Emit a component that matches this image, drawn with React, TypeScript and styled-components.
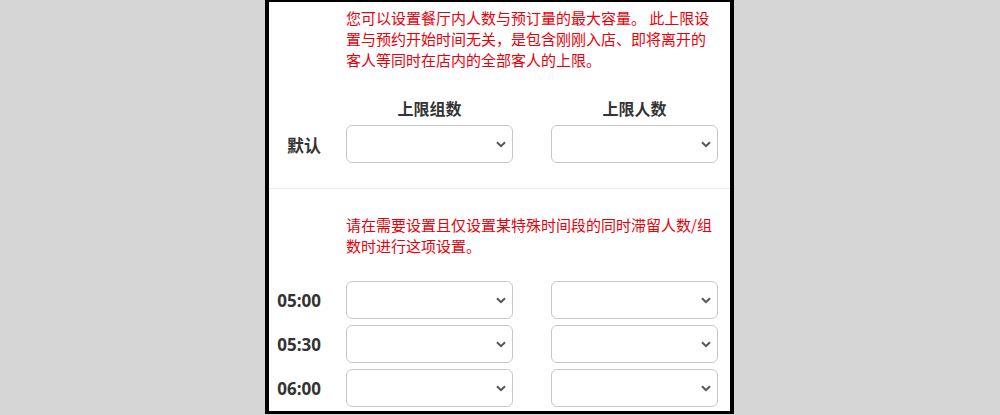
import React from 'react';
import styled, { createGlobalStyle } from 'styled-components';

const GlobalStyle = createGlobalStyle`
  html, body {
    margin: 0;
    padding: 0;
    background: #d6d6d6;
  }
  body {
    font-family: "Noto Sans CJK SC", "Noto Sans", sans-serif;
  }
`;

const Frame = styled.div`
  box-sizing: border-box;
  width: 469px;
  height: 414px;
  margin: 0 0 0 calc(50% - 235px);
  background: #fff;
  border: 4px solid #000;
  border-top-width: 2px;
  border-bottom-width: 3px;
  overflow: hidden;
`;

const Section = styled.section<{ $top: number; $divider?: boolean }>`
  padding: ${p => p.$top}px 11px 25px 0;
  border-bottom: ${p => (p.$divider ? '1px solid #ececec' : 'none')};
`;

const Note = styled.p<{ $gap: number }>`
  margin: 0 0 ${p => p.$gap}px 77px;
  color: #e8000b;
  font-size: 15px;
  line-height: 21px;
`;

const Row = styled.div`
  display: grid;
  grid-template-columns: 77px 372px;
  align-items: center;
  & + & {
    margin-top: 6px;
  }
`;

const Fields = styled.div`
  display: grid;
  grid-template-columns: 1fr 1fr;
  column-gap: 38px;
  align-items: center;
`;

const HeadRow = styled(Row)`
  margin-bottom: 6px;
`;

const ColTitle = styled.div`
  text-align: center;
  font-size: 16px;
  line-height: 22px;
  font-weight: 700;
  color: #333;
`;

const RowLabel = styled.div`
  text-align: right;
  padding-right: 25px;
  font-family: "Open Sans", "Noto Sans CJK SC", sans-serif;
  font-size: 17px;
  font-weight: 700;
  color: #333;
`;

const SelectBox = styled.div`
  position: relative;
  height: 38px;
`;

const Select = styled.select`
  box-sizing: border-box;
  width: 100%;
  height: 100%;
  appearance: none;
  background: #fff;
  border: 1px solid #c8c8c8;
  border-radius: 6px;
  padding: 0 28px 0 10px;
  font-size: 15px;
  outline: none;
`;

const Chevron = styled.svg`
  position: absolute;
  right: 7px;
  top: 50%;
  margin-top: -3px;
  width: 10px;
  height: 7px;
  pointer-events: none;
`;

const Dropdown: React.FC = () => (
  <SelectBox>
    <Select defaultValue="">
      <option value=""></option>
    </Select>
    <Chevron viewBox="0 0 10 7">
      <path d="M1 1.2 L5 5.2 L9 1.2" fill="none" stroke="#555" strokeWidth="2" />
    </Chevron>
  </SelectBox>
);

const times = ['05:00', '05:30', '06:00'];

export default function App() {
  return (
    <>
      <GlobalStyle />
      <Frame>
        <Section $top={5} $divider>
          <Note $gap={27}>
            您可以设置餐厅内人数与预订量的最大容量。 此上限设<br />
            置与预约开始时间无关，是包含刚刚入店、即将离开的<br />
            客人等同时在店内的全部客人的上限。
          </Note>
          <HeadRow>
            <span />
            <Fields>
              <ColTitle>上限组数</ColTitle>
              <ColTitle>上限人数</ColTitle>
            </Fields>
          </HeadRow>
          <Row>
            <RowLabel>默认</RowLabel>
            <Fields>
              <Dropdown />
              <Dropdown />
            </Fields>
          </Row>
        </Section>
        <Section $top={25}>
          <Note $gap={25}>
            请在需要设置且仅设置某特殊时间段的同时滞留人数/组<br />
            数时进行这项设置。
          </Note>
          {times.map(t => (
            <Row key={t}>
              <RowLabel>{t}</RowLabel>
              <Fields>
                <Dropdown />
                <Dropdown />
              </Fields>
            </Row>
          ))}
        </Section>
      </Frame>
    </>
  );
}
